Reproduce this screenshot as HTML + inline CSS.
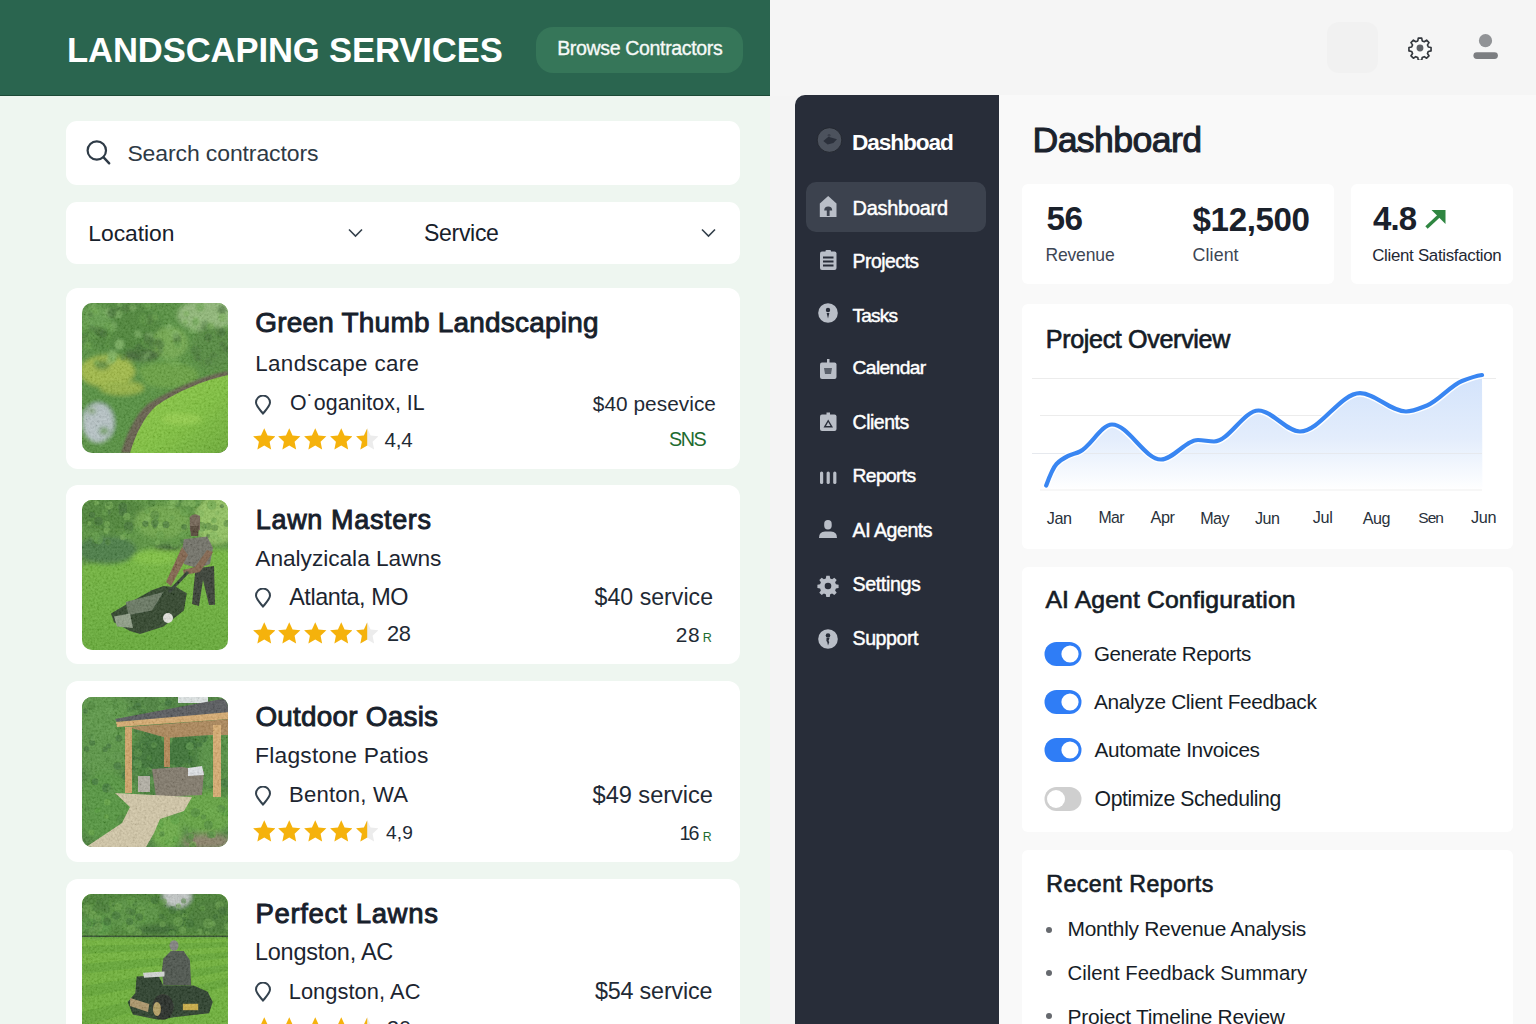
<!DOCTYPE html>
<html><head><meta charset="utf-8">
<style>
*{margin:0;padding:0;box-sizing:border-box}
html,body{width:1536px;height:1024px;overflow:hidden}
body{font-family:"Liberation Sans",sans-serif;background:#f4f4f4;position:relative}
.a{position:absolute;display:block}
.t{position:absolute;white-space:nowrap;line-height:1}
.w{position:absolute;background:#fff}
</style></head><body>

<div class="a" style="left:0;top:0;width:770px;height:1024px;background:#eef6f0"></div>
<div class="a" style="left:0;top:0;width:770px;height:96px;background:#2a654f;border-bottom:1.5px solid #1c4a37"></div>
<div class="t" style="left:67.0px;top:32.7px;font-size:34.62px;letter-spacing:-0.11px;font-weight:bold;color:#ffffff;">LANDSCAPING SERVICES</div>
<div class="a" style="left:536px;top:27px;width:207px;height:46px;border-radius:17px;background:#367659"></div>
<div class="t" style="left:557.2px;top:39.1px;font-size:19.54px;letter-spacing:-0.35px;font-weight:normal;color:#f6f9f7;-webkit-text-stroke:0.35px #f6f9f7;">Browse Contractors</div>
<div class="w" style="left:66px;top:121px;width:674px;height:64px;border-radius:11px"></div>
<svg class="a" style="left:84px;top:138px" width="30" height="30" viewBox="0 0 30 30"><circle cx="12.8" cy="12.5" r="9.2" fill="none" stroke="#2f3b47" stroke-width="2.2"/><line x1="19.6" y1="19.4" x2="25.2" y2="25.3" stroke="#2f3b47" stroke-width="2.4" stroke-linecap="round"/></svg>
<div class="t" style="left:127.4px;top:141.5px;font-size:22.98px;letter-spacing:-0.10px;font-weight:normal;color:#2e3a45;">Search contractors</div>
<div class="w" style="left:66px;top:202px;width:674px;height:62px;border-radius:11px"></div>
<div class="t" style="left:88.3px;top:221.5px;font-size:22.85px;letter-spacing:-0.03px;font-weight:normal;color:#17212b;">Location</div>
<div class="t" style="left:424.0px;top:221.7px;font-size:23.06px;letter-spacing:-0.32px;font-weight:normal;color:#17212b;">Service</div>
<svg class="a" style="left:347px;top:227px" width="17" height="12" viewBox="0 0 17 12"><polyline points="2,2.5 8.5,9 15,2.5" fill="none" stroke="#34404b" stroke-width="1.6"/></svg>
<svg class="a" style="left:700px;top:227px" width="17" height="12" viewBox="0 0 17 12"><polyline points="2,2.5 8.5,9 15,2.5" fill="none" stroke="#34404b" stroke-width="1.6"/></svg>
<div class="w" style="left:66px;top:288px;width:674px;height:180.5px;border-radius:12px"></div>
<div class="a" style="left:82px;top:303px;width:146px;height:150px;border-radius:10px;overflow:hidden"><svg width="146" height="150" viewBox="0 0 146 150"><defs><filter id="tx1" x="0" y="0" width="100%" height="100%"><feTurbulence type="fractalNoise" baseFrequency="0.45" numOctaves="2" seed="1"/><feColorMatrix type="matrix" values="1.4 0 0 0 -0.2  1.4 0 0 0 -0.2  1.4 0 0 0 -0.2  0 0 0 0 0.22"/></filter><filter id="bl1" x="-20%" y="-20%" width="140%" height="140%"><feGaussianBlur stdDeviation="2.2"/></filter><filter id="bs1"><feGaussianBlur stdDeviation="0.8"/></filter><linearGradient id="l1" x1="0" y1="0" x2="1" y2="1"><stop offset="0" stop-color="#8acc3a"/><stop offset="0.6" stop-color="#76be30"/><stop offset="1" stop-color="#62a828"/></linearGradient></defs><rect width="146" height="150" fill="#4a8a32"/><g filter="url(#bl1)"><ellipse cx="40" cy="25" rx="40" ry="25" fill="#3f7e2c"/><ellipse cx="15" cy="15" rx="15" ry="12" fill="#5a9a40"/><ellipse cx="125" cy="12" rx="30" ry="16" fill="#8ab670"/><ellipse cx="130" cy="45" rx="20" ry="22" fill="#4a8430"/><ellipse cx="88" cy="40" rx="18" ry="16" fill="#6aa542"/><ellipse cx="60" cy="52" rx="18" ry="6" fill="#355f28"/><ellipse cx="85" cy="72" rx="32" ry="13" fill="#5e9c36"/><ellipse cx="30" cy="95" rx="35" ry="40" fill="#4a8a30"/><ellipse cx="25" cy="68" rx="28" ry="16" fill="#9cb83a"/><ellipse cx="40" cy="85" rx="22" ry="7" fill="#90b038"/><ellipse cx="20" cy="62" rx="8" ry="5" fill="#5a8a30"/><ellipse cx="16" cy="120" rx="16" ry="20" fill="#b4c2c4"/><ellipse cx="22" cy="128" rx="5" ry="4" fill="#6a9a5a"/><ellipse cx="10" cy="108" rx="4" ry="3" fill="#7aa06a"/></g><g filter="url(#bs1)"><circle cx="66.0" cy="33.6" r="4.8" fill="#2f5f22" opacity="0.55"/><circle cx="66.0" cy="51.3" r="2.6" fill="#80b860" opacity="0.55"/><circle cx="69.5" cy="36.8" r="2.6" fill="#2f5f22" opacity="0.55"/><circle cx="44.3" cy="5.4" r="4.4" fill="#3a7028" opacity="0.55"/><circle cx="86.9" cy="23.8" r="3.4" fill="#80b860" opacity="0.55"/><circle cx="94.9" cy="37.4" r="4.5" fill="#3a7028" opacity="0.55"/><circle cx="8.7" cy="11.4" r="2.7" fill="#3a7028" opacity="0.55"/><circle cx="113.6" cy="19.6" r="3.8" fill="#5a9a3a" opacity="0.55"/><circle cx="75.8" cy="38.4" r="3.5" fill="#3a7028" opacity="0.55"/><circle cx="66.8" cy="16.7" r="5.0" fill="#3a7028" opacity="0.55"/><circle cx="103.3" cy="18.9" r="2.7" fill="#6aaa45" opacity="0.55"/><circle cx="4.3" cy="33.8" r="2.3" fill="#3a7028" opacity="0.55"/><circle cx="123.6" cy="23.2" r="4.9" fill="#3a7028" opacity="0.55"/><circle cx="31.2" cy="55.6" r="2.2" fill="#2f5f22" opacity="0.55"/><circle cx="143.1" cy="23.8" r="2.2" fill="#5a9a3a" opacity="0.55"/><circle cx="113.7" cy="16.2" r="2.3" fill="#6aaa45" opacity="0.55"/><circle cx="2.2" cy="24.6" r="4.8" fill="#5a9a3a" opacity="0.55"/><circle cx="36.0" cy="6.1" r="2.2" fill="#2f5f22" opacity="0.55"/><circle cx="25.9" cy="33.6" r="3.3" fill="#5a9a3a" opacity="0.55"/><circle cx="143.9" cy="46.2" r="3.3" fill="#2f5f22" opacity="0.55"/><circle cx="17.0" cy="25.2" r="2.6" fill="#6aaa45" opacity="0.55"/><circle cx="126.2" cy="58.5" r="3.8" fill="#3a7028" opacity="0.55"/><circle cx="30.8" cy="23.7" r="4.6" fill="#80b860" opacity="0.55"/><circle cx="14.6" cy="59.4" r="2.6" fill="#6aaa45" opacity="0.55"/><circle cx="1.4" cy="36.6" r="4.5" fill="#2f5f22" opacity="0.55"/><circle cx="10.7" cy="5.4" r="3.7" fill="#5a9a3a" opacity="0.55"/><circle cx="2.3" cy="22.1" r="3.9" fill="#5a9a3a" opacity="0.55"/><circle cx="140.0" cy="29.0" r="3.7" fill="#2f5f22" opacity="0.55"/><circle cx="26.7" cy="9.2" r="4.7" fill="#80b860" opacity="0.55"/><circle cx="36.4" cy="11.4" r="4.2" fill="#80b860" opacity="0.55"/><circle cx="28.7" cy="57.0" r="4.6" fill="#80b860" opacity="0.55"/><circle cx="11.5" cy="2.8" r="2.3" fill="#80b860" opacity="0.55"/><circle cx="140.6" cy="14.3" r="4.1" fill="#6aaa45" opacity="0.55"/><circle cx="61.4" cy="54.3" r="3.5" fill="#80b860" opacity="0.55"/><circle cx="25.6" cy="43.2" r="2.2" fill="#5a9a3a" opacity="0.55"/><circle cx="70.0" cy="39.2" r="3.8" fill="#3a7028" opacity="0.55"/><circle cx="40.9" cy="55.0" r="2.6" fill="#3a7028" opacity="0.55"/><circle cx="10.1" cy="24.7" r="2.7" fill="#3a7028" opacity="0.55"/><circle cx="25.7" cy="22.1" r="3.7" fill="#5a9a3a" opacity="0.55"/><circle cx="13.5" cy="8.3" r="3.4" fill="#6aaa45" opacity="0.55"/><circle cx="95.9" cy="41.5" r="3.8" fill="#5a9a3a" opacity="0.55"/><circle cx="86.1" cy="55.4" r="3.4" fill="#6aaa45" opacity="0.55"/><circle cx="102.3" cy="57.8" r="2.1" fill="#3a7028" opacity="0.55"/><circle cx="70.4" cy="43.8" r="3.0" fill="#3a7028" opacity="0.55"/><circle cx="11.0" cy="32.8" r="4.2" fill="#5a9a3a" opacity="0.55"/><circle cx="115.8" cy="54.9" r="3.1" fill="#2f5f22" opacity="0.55"/><circle cx="131.5" cy="52.3" r="3.3" fill="#3a7028" opacity="0.55"/><circle cx="126.1" cy="34.4" r="3.9" fill="#2f5f22" opacity="0.55"/><circle cx="55.4" cy="0.7" r="2.2" fill="#3a7028" opacity="0.55"/><circle cx="93.4" cy="59.6" r="4.6" fill="#6aaa45" opacity="0.55"/><circle cx="56.7" cy="44.1" r="3.7" fill="#2f5f22" opacity="0.55"/><circle cx="67.5" cy="32.5" r="3.6" fill="#80b860" opacity="0.55"/><circle cx="4.3" cy="36.1" r="3.4" fill="#5a9a3a" opacity="0.55"/><circle cx="139.8" cy="6.8" r="4.3" fill="#2f5f22" opacity="0.55"/><circle cx="37.4" cy="0.7" r="2.9" fill="#80b860" opacity="0.55"/><circle cx="29.6" cy="10.2" r="4.7" fill="#2f5f22" opacity="0.55"/><circle cx="72.8" cy="14.5" r="3.2" fill="#6aaa45" opacity="0.55"/><circle cx="29.0" cy="25.9" r="4.4" fill="#5a9a3a" opacity="0.55"/><circle cx="128.5" cy="23.1" r="3.7" fill="#6aaa45" opacity="0.55"/><circle cx="30.6" cy="8.1" r="3.1" fill="#3a7028" opacity="0.55"/><circle cx="103.8" cy="57.0" r="2.8" fill="#5a9a3a" opacity="0.55"/><circle cx="16.5" cy="28.3" r="4.8" fill="#2f5f22" opacity="0.55"/><circle cx="55.9" cy="31.2" r="4.0" fill="#80b860" opacity="0.55"/><circle cx="66.1" cy="4.5" r="2.1" fill="#80b860" opacity="0.55"/><circle cx="6.1" cy="42.5" r="3.7" fill="#6aaa45" opacity="0.55"/><circle cx="94.8" cy="33.8" r="3.9" fill="#2f5f22" opacity="0.55"/><circle cx="66.4" cy="1.5" r="4.5" fill="#5a9a3a" opacity="0.55"/><circle cx="113.8" cy="47.8" r="5.0" fill="#3a7028" opacity="0.55"/><circle cx="65.2" cy="37.8" r="4.0" fill="#6aaa45" opacity="0.55"/><circle cx="139.9" cy="41.1" r="2.6" fill="#2f5f22" opacity="0.55"/><circle cx="37.4" cy="42.9" r="4.3" fill="#80b860" opacity="0.55"/><circle cx="104.3" cy="10.7" r="2.8" fill="#6aaa45" opacity="0.55"/><circle cx="78.8" cy="56.8" r="3.5" fill="#5a9a3a" opacity="0.55"/><circle cx="57.5" cy="47.5" r="4.7" fill="#3a7028" opacity="0.55"/><circle cx="59.9" cy="53.6" r="3.2" fill="#2f5f22" opacity="0.55"/><circle cx="66.2" cy="37.5" r="4.7" fill="#2f5f22" opacity="0.55"/><circle cx="80.3" cy="39.2" r="3.5" fill="#6aaa45" opacity="0.55"/><circle cx="67.7" cy="39.1" r="2.6" fill="#3a7028" opacity="0.55"/><circle cx="31.1" cy="54.0" r="4.9" fill="#6aaa45" opacity="0.55"/><circle cx="78.4" cy="47.4" r="3.0" fill="#3a7028" opacity="0.55"/><circle cx="50.9" cy="5.0" r="3.3" fill="#80b860" opacity="0.55"/><circle cx="61.5" cy="16.5" r="4.8" fill="#5a9a3a" opacity="0.55"/><circle cx="118.1" cy="3.8" r="4.4" fill="#5a9a3a" opacity="0.55"/><circle cx="77.8" cy="41.2" r="4.7" fill="#2f5f22" opacity="0.55"/><circle cx="21.7" cy="31.0" r="4.2" fill="#2f5f22" opacity="0.55"/><circle cx="138.1" cy="29.6" r="4.8" fill="#3a7028" opacity="0.55"/><circle cx="110.6" cy="26.4" r="3.7" fill="#80b860" opacity="0.55"/><circle cx="93.3" cy="31.4" r="4.5" fill="#80b860" opacity="0.55"/><circle cx="37.5" cy="40.3" r="4.9" fill="#80b860" opacity="0.55"/><circle cx="30.4" cy="51.0" r="4.9" fill="#80b860" opacity="0.55"/></g><path d="M146 68 C120 73 88 87 66 101 C52 113 44 133 39 150 L146 150Z" fill="#5c5440" filter="url(#bs1)"/><path d="M146 72 C122 77 94 89 74 103 C61 115 53 133 48 150 L146 150Z" fill="url(#l1)"/><ellipse cx="100" cy="116" rx="20" ry="6" fill="#a2dc4c" opacity="0.5" filter="url(#bl1)"/><rect width="146" height="150" filter="url(#tx1)" opacity="0.8"/></svg></div>
<div class="t" style="left:255.2px;top:309.2px;font-size:27.96px;letter-spacing:0.23px;font-weight:normal;color:#17202b;-webkit-text-stroke:0.90px #17202b;">Green Thumb Landscaping</div>
<div class="t" style="left:255.3px;top:353.1px;font-size:22.37px;letter-spacing:0.35px;font-weight:normal;color:#1c2530;">Landscape care</div>
<svg class="a" style="left:254px;top:395px" width="18" height="20" viewBox="0 0 18 20"><path d="M9 18.6 C6.5 15.5 2 11 2 7.6 A7 7 0 0 1 16 7.6 C16 11 11.5 15.5 9 18.6 Z" fill="none" stroke="#34424e" stroke-width="2" stroke-linejoin="round"/></svg>
<div class="t" style="left:290.0px;top:393.0px;font-size:21.31px;letter-spacing:0.07px;font-weight:normal;color:#1c2530;">O˙oganitox, IL</div>
<div class="t" style="left:592.8px;top:394.3px;font-size:20.81px;letter-spacing:0.05px;font-weight:normal;color:#1f2a35;">$40 pesevice</div>
<svg class="a" style="left:252.5px;top:427.5px" width="22.5" height="22.5"><polygon points="11.25,0.22 14.55,7.38 22.38,8.31 16.59,13.66 18.13,21.39 11.25,17.54 4.37,21.39 5.91,13.66 0.12,8.31 7.95,7.38" fill="#f5b20c"/></svg><svg class="a" style="left:278.3px;top:427.5px" width="22.5" height="22.5"><polygon points="11.25,0.22 14.55,7.38 22.38,8.31 16.59,13.66 18.13,21.39 11.25,17.54 4.37,21.39 5.91,13.66 0.12,8.31 7.95,7.38" fill="#f5b20c"/></svg><svg class="a" style="left:304.1px;top:427.5px" width="22.5" height="22.5"><polygon points="11.25,0.22 14.55,7.38 22.38,8.31 16.59,13.66 18.13,21.39 11.25,17.54 4.37,21.39 5.91,13.66 0.12,8.31 7.95,7.38" fill="#f5b20c"/></svg><svg class="a" style="left:329.9px;top:427.5px" width="22.5" height="22.5"><polygon points="11.25,0.22 14.55,7.38 22.38,8.31 16.59,13.66 18.13,21.39 11.25,17.54 4.37,21.39 5.91,13.66 0.12,8.31 7.95,7.38" fill="#f5b20c"/></svg><svg class="a" style="left:355.7px;top:427.5px" width="22.5" height="22.5"><defs><clipPath id="h0"><rect x="0" y="0" width="11.2" height="22.5"/></clipPath></defs><polygon points="11.25,0.22 14.55,7.38 22.38,8.31 16.59,13.66 18.13,21.39 11.25,17.54 4.37,21.39 5.91,13.66 0.12,8.31 7.95,7.38" fill="#ececec"/><polygon points="11.25,0.22 14.55,7.38 22.38,8.31 16.59,13.66 18.13,21.39 11.25,17.54 4.37,21.39 5.91,13.66 0.12,8.31 7.95,7.38" fill="#f5b20c" clip-path="url(#h0)"/></svg>
<div class="t" style="left:384.5px;top:429.5px;font-size:20.62px;letter-spacing:-0.28px;font-weight:normal;color:#1f2a35;">4,4</div>
<div class="t" style="left:669.0px;top:429.5px;font-size:19.75px;letter-spacing:-1.45px;font-weight:normal;color:#1e6b2f;">SNS</div>
<div class="w" style="left:66px;top:485px;width:674px;height:179px;border-radius:12px"></div>
<div class="a" style="left:82px;top:500px;width:146px;height:150px;border-radius:10px;overflow:hidden"><svg width="146" height="150" viewBox="0 0 146 150"><defs><filter id="tx2" x="0" y="0" width="100%" height="100%"><feTurbulence type="fractalNoise" baseFrequency="0.45" numOctaves="2" seed="2"/><feColorMatrix type="matrix" values="1.4 0 0 0 -0.2  1.4 0 0 0 -0.2  1.4 0 0 0 -0.2  0 0 0 0 0.22"/></filter><filter id="bl2" x="-20%" y="-20%" width="140%" height="140%"><feGaussianBlur stdDeviation="2.2"/></filter><filter id="bs2"><feGaussianBlur stdDeviation="0.6"/></filter><linearGradient id="g2" x1="0" y1="0" x2="0" y2="1"><stop offset="0" stop-color="#72ba34"/><stop offset="1" stop-color="#5ca82a"/></linearGradient></defs><rect width="146" height="150" fill="url(#g2)"/><g filter="url(#bl2)"><path d="M-5 -5 H151 V50 C120 48 100 47 85 47 C60 47 40 60 -5 66Z" fill="#4f8e32"/><ellipse cx="30" cy="14" rx="35" ry="18" fill="#427e2c"/><ellipse cx="135" cy="20" rx="22" ry="24" fill="#8cc056"/><ellipse cx="80" cy="22" rx="28" ry="16" fill="#66a23e"/><ellipse cx="25" cy="50" rx="30" ry="14" fill="#3d7538"/><ellipse cx="86" cy="47.5" rx="14" ry="2.5" fill="#2a4e26"/><ellipse cx="72" cy="58" rx="22" ry="7" fill="#78c036"/></g><g filter="url(#bs2)"><circle cx="139.9" cy="6.2" r="2.1" fill="#2f6226" opacity="0.55"/><circle cx="26.9" cy="5.3" r="4.0" fill="#78b450" opacity="0.55"/><circle cx="115.7" cy="3.5" r="2.8" fill="#3f7a2c" opacity="0.55"/><circle cx="46.6" cy="26.5" r="4.8" fill="#2f6226" opacity="0.55"/><circle cx="103.4" cy="2.1" r="4.6" fill="#78b450" opacity="0.55"/><circle cx="45.4" cy="8.4" r="4.5" fill="#3f7a2c" opacity="0.55"/><circle cx="102.0" cy="26.9" r="2.8" fill="#2f6226" opacity="0.55"/><circle cx="45.6" cy="34.4" r="4.9" fill="#5a9a3a" opacity="0.55"/><circle cx="40.8" cy="11.9" r="4.1" fill="#2f6226" opacity="0.55"/><circle cx="7.2" cy="23.4" r="2.1" fill="#78b450" opacity="0.55"/><circle cx="73.9" cy="22.8" r="3.2" fill="#5a9a3a" opacity="0.55"/><circle cx="44.9" cy="16.4" r="3.7" fill="#78b450" opacity="0.55"/><circle cx="84.0" cy="24.7" r="3.6" fill="#2f6226" opacity="0.55"/><circle cx="12.9" cy="43.8" r="3.1" fill="#2f6226" opacity="0.55"/><circle cx="114.1" cy="2.6" r="4.5" fill="#5a9a3a" opacity="0.55"/><circle cx="74.8" cy="17.6" r="2.3" fill="#5a9a3a" opacity="0.55"/><circle cx="25.0" cy="24.1" r="3.0" fill="#78b450" opacity="0.55"/><circle cx="132.8" cy="27.7" r="3.3" fill="#3f7a2c" opacity="0.55"/><circle cx="78.2" cy="35.0" r="3.9" fill="#5a9a3a" opacity="0.55"/><circle cx="95.7" cy="4.4" r="2.6" fill="#3f7a2c" opacity="0.55"/><circle cx="120.9" cy="40.5" r="3.4" fill="#3f7a2c" opacity="0.55"/><circle cx="72.8" cy="23.1" r="3.8" fill="#2f6226" opacity="0.55"/><circle cx="69.5" cy="2.9" r="4.1" fill="#3f7a2c" opacity="0.55"/><circle cx="119.7" cy="26.8" r="4.8" fill="#3f7a2c" opacity="0.55"/><circle cx="27.3" cy="15.4" r="2.2" fill="#3f7a2c" opacity="0.55"/><circle cx="25.0" cy="30.5" r="3.3" fill="#78b450" opacity="0.55"/><circle cx="25.9" cy="3.4" r="2.6" fill="#3f7a2c" opacity="0.55"/><circle cx="145.0" cy="23.5" r="3.5" fill="#3f7a2c" opacity="0.55"/><circle cx="26.4" cy="12.2" r="2.3" fill="#2f6226" opacity="0.55"/><circle cx="90.3" cy="17.7" r="2.4" fill="#5a9a3a" opacity="0.55"/><circle cx="5.6" cy="16.6" r="4.5" fill="#3f7a2c" opacity="0.55"/><circle cx="30.0" cy="33.2" r="3.9" fill="#3f7a2c" opacity="0.55"/><circle cx="109.5" cy="31.6" r="3.4" fill="#5a9a3a" opacity="0.55"/><circle cx="129.8" cy="5.0" r="4.8" fill="#5a9a3a" opacity="0.55"/><circle cx="26.0" cy="42.3" r="3.0" fill="#3f7a2c" opacity="0.55"/><circle cx="72.8" cy="26.6" r="2.1" fill="#2f6226" opacity="0.55"/><circle cx="102.3" cy="12.2" r="4.3" fill="#5a9a3a" opacity="0.55"/><circle cx="92.3" cy="43.4" r="4.5" fill="#5a9a3a" opacity="0.55"/><circle cx="64.7" cy="18.9" r="3.1" fill="#78b450" opacity="0.55"/><circle cx="126.1" cy="36.0" r="2.0" fill="#2f6226" opacity="0.55"/><circle cx="88.8" cy="4.7" r="4.5" fill="#78b450" opacity="0.55"/><circle cx="40.7" cy="37.2" r="2.8" fill="#78b450" opacity="0.55"/><circle cx="40.6" cy="7.0" r="4.5" fill="#2f6226" opacity="0.55"/><circle cx="101.7" cy="36.0" r="4.9" fill="#5a9a3a" opacity="0.55"/><circle cx="72.9" cy="15.1" r="4.6" fill="#3f7a2c" opacity="0.55"/><circle cx="56.5" cy="28.9" r="2.6" fill="#5a9a3a" opacity="0.55"/><circle cx="12.5" cy="40.5" r="3.0" fill="#3f7a2c" opacity="0.55"/><circle cx="75.6" cy="42.7" r="2.5" fill="#78b450" opacity="0.55"/><circle cx="126.2" cy="26.3" r="3.6" fill="#3f7a2c" opacity="0.55"/><circle cx="16.6" cy="22.3" r="2.2" fill="#3f7a2c" opacity="0.55"/><circle cx="14.4" cy="2.9" r="2.5" fill="#78b450" opacity="0.55"/><circle cx="137.0" cy="40.0" r="3.2" fill="#78b450" opacity="0.55"/><circle cx="47.0" cy="29.7" r="4.4" fill="#3f7a2c" opacity="0.55"/><circle cx="131.6" cy="35.2" r="4.0" fill="#78b450" opacity="0.55"/><circle cx="99.1" cy="0.1" r="2.7" fill="#3f7a2c" opacity="0.55"/><circle cx="135.2" cy="13.1" r="2.1" fill="#78b450" opacity="0.55"/><circle cx="16.5" cy="39.9" r="4.5" fill="#5a9a3a" opacity="0.55"/><circle cx="23.3" cy="12.5" r="3.2" fill="#5a9a3a" opacity="0.55"/><circle cx="118.7" cy="13.5" r="3.6" fill="#78b450" opacity="0.55"/><circle cx="131.9" cy="20.4" r="2.8" fill="#5a9a3a" opacity="0.55"/><circle cx="13.6" cy="36.2" r="4.3" fill="#5a9a3a" opacity="0.55"/><circle cx="64.9" cy="11.3" r="2.7" fill="#5a9a3a" opacity="0.55"/><circle cx="16.5" cy="21.2" r="4.4" fill="#2f6226" opacity="0.55"/><circle cx="10.1" cy="14.9" r="3.1" fill="#2f6226" opacity="0.55"/><circle cx="63.4" cy="23.7" r="3.2" fill="#2f6226" opacity="0.55"/><circle cx="118.0" cy="29.5" r="3.1" fill="#78b450" opacity="0.55"/><circle cx="100.4" cy="41.2" r="2.3" fill="#2f6226" opacity="0.55"/><circle cx="110.0" cy="3.5" r="3.7" fill="#78b450" opacity="0.55"/><circle cx="91.9" cy="0.9" r="4.8" fill="#78b450" opacity="0.55"/><circle cx="78.5" cy="25.8" r="2.6" fill="#78b450" opacity="0.55"/></g><g filter="url(#bs2)"><path d="M113.5 68.4 L132 66 L133 104.8 L127 105 L121 80 L117 106 L110 104Z" fill="#2a3025"/><path d="M107.7 17 Q112 12 118 16 L118 30 L108 31Z" fill="#6a5a48"/><path d="M108 26 L117 26 L116 36 L109 36Z" fill="#4a3a2c"/><path d="M101.9 39.3 L125.2 36.4 L131 48 L128 64 L116.4 68.4 L101.9 64 L100.4 48Z" fill="#6b6a5e"/><path d="M100 47 L84 82 L89 86 L106 55Z" fill="#7a5a40"/><path d="M125 50 L131 52 L118 72 L102 75 L101 70 L113 67Z" fill="#7a5a40"/><path d="M29 113.5 L43.7 104.8 L69.9 90.2 L81.5 85.9 L94.6 87.3 L104.8 93.2 L101.9 110.6 L81.5 126.6 L58.2 133.9 L48 131 L32 122.3Z" fill="#22381f"/><path d="M43.7 101.9 L81.5 92 L69.9 110.6 L46.6 115Z" fill="#5f7058"/><path d="M32 116.4 L48 113.5 L51 128 L35 126.6Z" fill="#8a9a80"/><line x1="87" y1="92" x2="106" y2="72" stroke="#263626" stroke-width="3.2"/><circle cx="86" cy="118" r="5" fill="#e4e4dc"/></g><rect width="146" height="150" filter="url(#tx2)" opacity="0.8"/></svg></div>
<div class="t" style="left:255.8px;top:506.7px;font-size:27.00px;letter-spacing:0.65px;font-weight:normal;color:#17202b;-webkit-text-stroke:0.90px #17202b;">Lawn Masters</div>
<div class="t" style="left:255.3px;top:547.1px;font-size:22.70px;letter-spacing:-0.03px;font-weight:normal;color:#1c2530;">Analyzicala Lawns</div>
<svg class="a" style="left:254px;top:588px" width="18" height="20" viewBox="0 0 18 20"><path d="M9 18.6 C6.5 15.5 2 11 2 7.6 A7 7 0 0 1 16 7.6 C16 11 11.5 15.5 9 18.6 Z" fill="none" stroke="#34424e" stroke-width="2" stroke-linejoin="round"/></svg>
<div class="t" style="left:289.2px;top:586.2px;font-size:23.40px;letter-spacing:-0.42px;font-weight:normal;color:#1c2530;">Atlanta, MO</div>
<div class="t" style="left:594.6px;top:585.6px;font-size:23.10px;letter-spacing:0.03px;font-weight:normal;color:#1f2a35;">$40 service</div>
<svg class="a" style="left:252.5px;top:621.9px" width="22.5" height="22.5"><polygon points="11.25,0.22 14.55,7.38 22.38,8.31 16.59,13.66 18.13,21.39 11.25,17.54 4.37,21.39 5.91,13.66 0.12,8.31 7.95,7.38" fill="#f5b20c"/></svg><svg class="a" style="left:278.3px;top:621.9px" width="22.5" height="22.5"><polygon points="11.25,0.22 14.55,7.38 22.38,8.31 16.59,13.66 18.13,21.39 11.25,17.54 4.37,21.39 5.91,13.66 0.12,8.31 7.95,7.38" fill="#f5b20c"/></svg><svg class="a" style="left:304.1px;top:621.9px" width="22.5" height="22.5"><polygon points="11.25,0.22 14.55,7.38 22.38,8.31 16.59,13.66 18.13,21.39 11.25,17.54 4.37,21.39 5.91,13.66 0.12,8.31 7.95,7.38" fill="#f5b20c"/></svg><svg class="a" style="left:329.9px;top:621.9px" width="22.5" height="22.5"><polygon points="11.25,0.22 14.55,7.38 22.38,8.31 16.59,13.66 18.13,21.39 11.25,17.54 4.37,21.39 5.91,13.66 0.12,8.31 7.95,7.38" fill="#f5b20c"/></svg><svg class="a" style="left:355.7px;top:621.9px" width="22.5" height="22.5"><defs><clipPath id="h1"><rect x="0" y="0" width="11.2" height="22.5"/></clipPath></defs><polygon points="11.25,0.22 14.55,7.38 22.38,8.31 16.59,13.66 18.13,21.39 11.25,17.54 4.37,21.39 5.91,13.66 0.12,8.31 7.95,7.38" fill="#ececec"/><polygon points="11.25,0.22 14.55,7.38 22.38,8.31 16.59,13.66 18.13,21.39 11.25,17.54 4.37,21.39 5.91,13.66 0.12,8.31 7.95,7.38" fill="#f5b20c" clip-path="url(#h1)"/></svg>
<div class="t" style="left:387.0px;top:623.2px;font-size:21.90px;letter-spacing:-0.31px;font-weight:normal;color:#1f2a35;">28</div>
<div class="t" style="left:675.8px;top:625.0px;font-size:20.89px;letter-spacing:0.51px;font-weight:normal;color:#1f2b35;">28</div>
<div class="t" style="left:702.7px;top:632.1px;font-size:12.58px;letter-spacing:0.00px;font-weight:normal;color:#1e6b2f;">R</div>
<div class="w" style="left:66px;top:681px;width:674px;height:181px;border-radius:12px"></div>
<div class="a" style="left:82px;top:696.5px;width:146px;height:150px;border-radius:10px;overflow:hidden"><svg width="146" height="150" viewBox="0 0 146 150"><defs><filter id="tx3" x="0" y="0" width="100%" height="100%"><feTurbulence type="fractalNoise" baseFrequency="0.45" numOctaves="2" seed="3"/><feColorMatrix type="matrix" values="1.4 0 0 0 -0.2  1.4 0 0 0 -0.2  1.4 0 0 0 -0.2  0 0 0 0 0.22"/></filter><filter id="bl3" x="-20%" y="-20%" width="140%" height="140%"><feGaussianBlur stdDeviation="3"/></filter><filter id="bs3"><feGaussianBlur stdDeviation="0.6"/></filter></defs><rect width="146" height="150" fill="#3f7a30"/><g filter="url(#bl3)"><ellipse cx="20" cy="35" rx="35" ry="45" fill="#4f9038"/><ellipse cx="90" cy="60" rx="45" ry="25" fill="#2f6a28"/><ellipse cx="135" cy="60" rx="20" ry="35" fill="#4a8a35"/><ellipse cx="25" cy="110" rx="35" ry="35" fill="#4a9030"/><ellipse cx="125" cy="115" rx="30" ry="22" fill="#5aa035"/><ellipse cx="85" cy="135" rx="16" ry="18" fill="#62a83a"/><ellipse cx="125" cy="145" rx="25" ry="8" fill="#857a60"/></g><g filter="url(#bs3)"><circle cx="83.3" cy="60.1" r="4.5" fill="#2c6224" opacity="0.55"/><circle cx="69.9" cy="83.6" r="3.6" fill="#5a9a42" opacity="0.55"/><circle cx="143.0" cy="86.0" r="4.8" fill="#2c6224" opacity="0.55"/><circle cx="141.1" cy="50.2" r="3.3" fill="#3a7a2c" opacity="0.55"/><circle cx="44.0" cy="29.4" r="3.5" fill="#3a7a2c" opacity="0.55"/><circle cx="108.5" cy="81.7" r="4.0" fill="#2c6224" opacity="0.55"/><circle cx="135.5" cy="52.8" r="4.0" fill="#3a7a2c" opacity="0.55"/><circle cx="126.2" cy="30.3" r="4.7" fill="#5a9a42" opacity="0.55"/><circle cx="144.6" cy="6.3" r="3.1" fill="#2c6224" opacity="0.55"/><circle cx="112.4" cy="48.7" r="3.0" fill="#2c6224" opacity="0.55"/><circle cx="76.6" cy="28.9" r="3.2" fill="#5a9a42" opacity="0.55"/><circle cx="100.4" cy="83.5" r="3.1" fill="#3a7a2c" opacity="0.55"/><circle cx="9.2" cy="8.9" r="4.4" fill="#3a7a2c" opacity="0.55"/><circle cx="8.4" cy="26.2" r="2.6" fill="#5a9a42" opacity="0.55"/><circle cx="98.8" cy="36.9" r="3.8" fill="#2c6224" opacity="0.55"/><circle cx="86.1" cy="43.2" r="4.6" fill="#4f8e38" opacity="0.55"/><circle cx="10.3" cy="45.7" r="3.1" fill="#2c6224" opacity="0.55"/><circle cx="16.2" cy="82.9" r="2.0" fill="#4f8e38" opacity="0.55"/><circle cx="105.6" cy="82.9" r="4.5" fill="#5a9a42" opacity="0.55"/><circle cx="132.8" cy="69.3" r="3.5" fill="#3a7a2c" opacity="0.55"/><circle cx="129.3" cy="88.4" r="2.8" fill="#2c6224" opacity="0.55"/><circle cx="61.6" cy="48.2" r="2.8" fill="#4f8e38" opacity="0.55"/><circle cx="56.6" cy="72.1" r="3.0" fill="#2c6224" opacity="0.55"/><circle cx="24.5" cy="91.0" r="4.7" fill="#2c6224" opacity="0.55"/><circle cx="90.8" cy="27.2" r="3.9" fill="#2c6224" opacity="0.55"/><circle cx="121.4" cy="41.2" r="4.4" fill="#2c6224" opacity="0.55"/><circle cx="109.6" cy="55.7" r="3.5" fill="#3a7a2c" opacity="0.55"/><circle cx="33.3" cy="8.8" r="2.8" fill="#3a7a2c" opacity="0.55"/><circle cx="83.7" cy="18.9" r="2.6" fill="#3a7a2c" opacity="0.55"/><circle cx="9.4" cy="64.6" r="2.0" fill="#4f8e38" opacity="0.55"/><circle cx="145.4" cy="64.6" r="2.0" fill="#5a9a42" opacity="0.55"/><circle cx="60.4" cy="87.1" r="4.4" fill="#5a9a42" opacity="0.55"/><circle cx="66.7" cy="74.1" r="3.8" fill="#5a9a42" opacity="0.55"/><circle cx="115.5" cy="21.7" r="2.3" fill="#2c6224" opacity="0.55"/><circle cx="13.0" cy="84.8" r="3.5" fill="#2c6224" opacity="0.55"/><circle cx="141.3" cy="71.7" r="4.5" fill="#3a7a2c" opacity="0.55"/><circle cx="117.6" cy="47.3" r="2.9" fill="#2c6224" opacity="0.55"/><circle cx="47.7" cy="12.2" r="3.0" fill="#2c6224" opacity="0.55"/><circle cx="56.5" cy="71.4" r="2.8" fill="#3a7a2c" opacity="0.55"/><circle cx="77.1" cy="79.6" r="2.8" fill="#5a9a42" opacity="0.55"/><circle cx="60.5" cy="12.4" r="4.4" fill="#4f8e38" opacity="0.55"/><circle cx="67.2" cy="60.7" r="2.7" fill="#3a7a2c" opacity="0.55"/><circle cx="3.4" cy="14.2" r="2.6" fill="#2c6224" opacity="0.55"/><circle cx="34.7" cy="58.4" r="4.4" fill="#4f8e38" opacity="0.55"/><circle cx="65.6" cy="36.4" r="2.8" fill="#2c6224" opacity="0.55"/><circle cx="32.8" cy="4.0" r="2.5" fill="#3a7a2c" opacity="0.55"/><circle cx="50.5" cy="11.1" r="4.9" fill="#4f8e38" opacity="0.55"/><circle cx="48.4" cy="76.9" r="2.1" fill="#5a9a42" opacity="0.55"/><circle cx="98.2" cy="12.3" r="2.5" fill="#4f8e38" opacity="0.55"/><circle cx="90.0" cy="71.4" r="4.5" fill="#4f8e38" opacity="0.55"/><circle cx="27.5" cy="18.9" r="4.6" fill="#4f8e38" opacity="0.55"/><circle cx="125.2" cy="67.3" r="2.8" fill="#4f8e38" opacity="0.55"/><circle cx="132.5" cy="59.6" r="2.7" fill="#4f8e38" opacity="0.55"/><circle cx="117.0" cy="42.2" r="3.2" fill="#3a7a2c" opacity="0.55"/><circle cx="53.9" cy="41.9" r="2.8" fill="#3a7a2c" opacity="0.55"/><circle cx="15.1" cy="17.7" r="3.0" fill="#5a9a42" opacity="0.55"/><circle cx="121.8" cy="12.5" r="2.7" fill="#5a9a42" opacity="0.55"/><circle cx="138.2" cy="39.3" r="2.4" fill="#3a7a2c" opacity="0.55"/><circle cx="116.0" cy="37.8" r="2.3" fill="#4f8e38" opacity="0.55"/><circle cx="55.9" cy="55.8" r="4.4" fill="#4f8e38" opacity="0.55"/><circle cx="72.1" cy="48.1" r="2.9" fill="#4f8e38" opacity="0.55"/><circle cx="41.3" cy="43.5" r="4.7" fill="#5a9a42" opacity="0.55"/><circle cx="60.5" cy="1.3" r="2.5" fill="#4f8e38" opacity="0.55"/><circle cx="44.3" cy="78.6" r="4.8" fill="#2c6224" opacity="0.55"/><circle cx="117.4" cy="18.5" r="3.4" fill="#5a9a42" opacity="0.55"/><circle cx="36.8" cy="41.2" r="3.5" fill="#2c6224" opacity="0.55"/><circle cx="51.2" cy="11.3" r="2.1" fill="#2c6224" opacity="0.55"/><circle cx="35.4" cy="69.0" r="3.9" fill="#2c6224" opacity="0.55"/><circle cx="120.0" cy="24.9" r="2.1" fill="#3a7a2c" opacity="0.55"/><circle cx="26.7" cy="48.9" r="2.6" fill="#2c6224" opacity="0.55"/><circle cx="9.1" cy="39.7" r="2.9" fill="#3a7a2c" opacity="0.55"/><circle cx="63.2" cy="48.5" r="3.1" fill="#2c6224" opacity="0.55"/><circle cx="51.2" cy="91.3" r="3.8" fill="#4f8e38" opacity="0.55"/><circle cx="107.8" cy="63.7" r="2.8" fill="#2c6224" opacity="0.55"/><circle cx="11.5" cy="41.0" r="3.0" fill="#5a9a42" opacity="0.55"/><circle cx="56.6" cy="13.8" r="2.9" fill="#5a9a42" opacity="0.55"/><circle cx="68.2" cy="76.2" r="3.1" fill="#2c6224" opacity="0.55"/><circle cx="41.9" cy="63.3" r="2.0" fill="#5a9a42" opacity="0.55"/><circle cx="86.4" cy="6.0" r="3.6" fill="#2c6224" opacity="0.55"/><circle cx="26.7" cy="14.3" r="3.5" fill="#5a9a42" opacity="0.55"/><circle cx="60.1" cy="15.8" r="3.9" fill="#2c6224" opacity="0.55"/><circle cx="86.5" cy="40.8" r="4.7" fill="#4f8e38" opacity="0.55"/><circle cx="110.9" cy="1.1" r="3.9" fill="#5a9a42" opacity="0.55"/><circle cx="23.1" cy="52.2" r="2.8" fill="#2c6224" opacity="0.55"/><circle cx="69.6" cy="68.7" r="2.5" fill="#2c6224" opacity="0.55"/><circle cx="25.4" cy="63.2" r="2.2" fill="#3a7a2c" opacity="0.55"/><circle cx="108.5" cy="86.8" r="4.3" fill="#4f8e38" opacity="0.55"/><circle cx="78.9" cy="11.8" r="3.4" fill="#5a9a42" opacity="0.55"/><circle cx="104.3" cy="70.8" r="4.8" fill="#4f8e38" opacity="0.55"/><circle cx="55.5" cy="76.2" r="3.1" fill="#4f8e38" opacity="0.55"/><circle cx="128.3" cy="85.2" r="4.7" fill="#5a9a42" opacity="0.55"/><circle cx="72.7" cy="27.4" r="3.9" fill="#2c6224" opacity="0.55"/><circle cx="107.9" cy="49.1" r="3.9" fill="#5a9a42" opacity="0.55"/><circle cx="30.1" cy="13.2" r="2.3" fill="#5a9a42" opacity="0.55"/><circle cx="141.8" cy="12.6" r="2.3" fill="#5a9a42" opacity="0.55"/><circle cx="79.8" cy="72.0" r="3.5" fill="#2c6224" opacity="0.55"/><circle cx="38.1" cy="32.1" r="3.5" fill="#3a7a2c" opacity="0.55"/><circle cx="29.3" cy="33.3" r="4.0" fill="#5a9a42" opacity="0.55"/><circle cx="112.9" cy="10.2" r="2.4" fill="#2c6224" opacity="0.55"/><circle cx="60.0" cy="74.4" r="4.1" fill="#3a7a2c" opacity="0.55"/><circle cx="4.5" cy="52.1" r="3.0" fill="#2c6224" opacity="0.55"/><circle cx="55.2" cy="32.7" r="3.5" fill="#2c6224" opacity="0.55"/><circle cx="55.5" cy="9.6" r="4.1" fill="#2c6224" opacity="0.55"/><circle cx="80.0" cy="2.5" r="3.6" fill="#5a9a42" opacity="0.55"/><circle cx="83.0" cy="40.7" r="4.3" fill="#4f8e38" opacity="0.55"/><circle cx="58.1" cy="74.3" r="3.5" fill="#3a7a2c" opacity="0.55"/><circle cx="28.8" cy="92.8" r="3.8" fill="#4f8e38" opacity="0.55"/><circle cx="55.5" cy="66.7" r="4.5" fill="#5a9a42" opacity="0.55"/><circle cx="127.4" cy="32.3" r="3.1" fill="#2c6224" opacity="0.55"/><circle cx="17.5" cy="29.3" r="3.1" fill="#5a9a42" opacity="0.55"/><circle cx="77.2" cy="127.2" r="4.5" fill="#4a9a30" opacity="0.55"/><circle cx="128.8" cy="115.1" r="4.8" fill="#62aa3a" opacity="0.55"/><circle cx="139.5" cy="113.8" r="3.8" fill="#4a9a30" opacity="0.55"/><circle cx="14.1" cy="114.1" r="2.0" fill="#4a9a30" opacity="0.55"/><circle cx="109.9" cy="99.8" r="2.2" fill="#62aa3a" opacity="0.55"/><circle cx="108.0" cy="133.8" r="2.2" fill="#62aa3a" opacity="0.55"/><circle cx="136.3" cy="127.4" r="3.9" fill="#62aa3a" opacity="0.55"/><circle cx="55.7" cy="106.7" r="3.4" fill="#4a9a30" opacity="0.55"/><circle cx="88.7" cy="126.5" r="3.2" fill="#62aa3a" opacity="0.55"/><circle cx="34.5" cy="132.6" r="2.3" fill="#3a7a28" opacity="0.55"/><circle cx="109.3" cy="139.6" r="2.8" fill="#4a9a30" opacity="0.55"/><circle cx="84.9" cy="145.2" r="2.6" fill="#4a9a30" opacity="0.55"/><circle cx="59.2" cy="137.7" r="3.0" fill="#4a9a30" opacity="0.55"/><circle cx="76.0" cy="140.5" r="3.4" fill="#62aa3a" opacity="0.55"/><circle cx="52.9" cy="119.4" r="2.4" fill="#4a9a30" opacity="0.55"/><circle cx="43.2" cy="98.8" r="2.9" fill="#4a9a30" opacity="0.55"/><circle cx="85.4" cy="111.3" r="4.8" fill="#62aa3a" opacity="0.55"/><circle cx="137.7" cy="112.0" r="3.6" fill="#3a7a28" opacity="0.55"/><circle cx="110.7" cy="148.1" r="3.8" fill="#62aa3a" opacity="0.55"/><circle cx="9.5" cy="135.4" r="3.0" fill="#62aa3a" opacity="0.55"/><circle cx="25.3" cy="105.2" r="3.2" fill="#62aa3a" opacity="0.55"/><circle cx="53.1" cy="110.3" r="4.8" fill="#3a7a28" opacity="0.55"/><circle cx="93.0" cy="123.2" r="4.4" fill="#4a9a30" opacity="0.55"/><circle cx="39.4" cy="122.6" r="4.9" fill="#3a7a28" opacity="0.55"/><circle cx="79.9" cy="137.0" r="2.8" fill="#3a7a28" opacity="0.55"/><circle cx="130.6" cy="137.7" r="3.4" fill="#4a9a30" opacity="0.55"/><circle cx="143.9" cy="115.2" r="4.4" fill="#4a9a30" opacity="0.55"/><circle cx="16.2" cy="112.9" r="2.5" fill="#4a9a30" opacity="0.55"/><circle cx="38.8" cy="136.3" r="4.1" fill="#3a7a28" opacity="0.55"/><circle cx="107.2" cy="142.4" r="3.8" fill="#3a7a28" opacity="0.55"/><circle cx="141.0" cy="96.3" r="4.5" fill="#3a7a28" opacity="0.55"/><circle cx="72.0" cy="116.6" r="2.4" fill="#62aa3a" opacity="0.55"/><circle cx="58.5" cy="123.6" r="4.6" fill="#4a9a30" opacity="0.55"/><circle cx="121.5" cy="119.9" r="2.7" fill="#3a7a28" opacity="0.55"/><circle cx="139.4" cy="112.1" r="4.0" fill="#3a7a28" opacity="0.55"/><circle cx="90.7" cy="101.6" r="2.7" fill="#3a7a28" opacity="0.55"/><circle cx="74.1" cy="111.9" r="2.3" fill="#4a9a30" opacity="0.55"/><circle cx="128.4" cy="137.7" r="3.5" fill="#3a7a28" opacity="0.55"/><circle cx="44.1" cy="124.3" r="3.6" fill="#4a9a30" opacity="0.55"/><circle cx="136.9" cy="113.8" r="4.3" fill="#62aa3a" opacity="0.55"/><circle cx="110.5" cy="149.4" r="3.1" fill="#3a7a28" opacity="0.55"/><circle cx="5.2" cy="111.8" r="2.5" fill="#3a7a28" opacity="0.55"/><circle cx="67.7" cy="95.5" r="4.2" fill="#3a7a28" opacity="0.55"/><circle cx="126.3" cy="128.1" r="4.6" fill="#3a7a28" opacity="0.55"/><circle cx="38.1" cy="149.7" r="4.5" fill="#4a9a30" opacity="0.55"/><circle cx="24.4" cy="119.5" r="2.3" fill="#62aa3a" opacity="0.55"/><circle cx="93.7" cy="142.2" r="2.9" fill="#4a9a30" opacity="0.55"/><circle cx="6.5" cy="149.4" r="3.6" fill="#3a7a28" opacity="0.55"/><circle cx="100.8" cy="114.1" r="2.6" fill="#4a9a30" opacity="0.55"/><circle cx="113.3" cy="115.7" r="4.8" fill="#3a7a28" opacity="0.55"/></g><g filter="url(#bs3)"><rect x="96" y="-2" width="30" height="8" fill="#dfe5e5"/><path d="M33 22 L140 2 L148 4 L148 16 L35 25Z" fill="#4e5052"/><path d="M34 25 L148 15 L148 22 L35 30Z" fill="#d8a868"/><path d="M45 30 L148 22 L148 38 L128 38 L85 41 L60 34Z" fill="#a88050"/><rect x="43" y="30" width="7" height="66" fill="#d0a060"/><rect x="82" y="40" width="6" height="30" fill="#b08048"/><rect x="131" y="28" width="8" height="72" fill="#d8a868"/><path d="M70 72 L100 70 L122 74 L120 98 L74 100Z" fill="#7a7262"/><path d="M106 71 L120 69 L122 78 L106 79Z" fill="#dfe3e6"/><rect x="56" y="79" width="12" height="16" fill="#b0aca0"/><path d="M33 96 L110 100 L102 114 L78 122 L72 136 L64 150 L4 150 L40 126 L48 110Z" fill="#d2c6a4"/></g><rect width="146" height="150" filter="url(#tx3)" opacity="0.8"/></svg></div>
<div class="t" style="left:255.4px;top:702.5px;font-size:27.85px;letter-spacing:0.26px;font-weight:normal;color:#17202b;-webkit-text-stroke:0.90px #17202b;">Outdoor Oasis</div>
<div class="t" style="left:255.0px;top:744.1px;font-size:22.80px;letter-spacing:0.24px;font-weight:normal;color:#1c2530;">Flagstone Patios</div>
<svg class="a" style="left:254px;top:786px" width="18" height="20" viewBox="0 0 18 20"><path d="M9 18.6 C6.5 15.5 2 11 2 7.6 A7 7 0 0 1 16 7.6 C16 11 11.5 15.5 9 18.6 Z" fill="none" stroke="#34424e" stroke-width="2" stroke-linejoin="round"/></svg>
<div class="t" style="left:289.0px;top:784.3px;font-size:22.10px;letter-spacing:0.21px;font-weight:normal;color:#1c2530;">Benton, WA</div>
<div class="t" style="left:592.6px;top:784.0px;font-size:23.65px;letter-spacing:-0.06px;font-weight:normal;color:#1f2a35;">$49 service</div>
<svg class="a" style="left:252.5px;top:819.9px" width="22.5" height="22.5"><polygon points="11.25,0.22 14.55,7.38 22.38,8.31 16.59,13.66 18.13,21.39 11.25,17.54 4.37,21.39 5.91,13.66 0.12,8.31 7.95,7.38" fill="#f5b20c"/></svg><svg class="a" style="left:278.3px;top:819.9px" width="22.5" height="22.5"><polygon points="11.25,0.22 14.55,7.38 22.38,8.31 16.59,13.66 18.13,21.39 11.25,17.54 4.37,21.39 5.91,13.66 0.12,8.31 7.95,7.38" fill="#f5b20c"/></svg><svg class="a" style="left:304.1px;top:819.9px" width="22.5" height="22.5"><polygon points="11.25,0.22 14.55,7.38 22.38,8.31 16.59,13.66 18.13,21.39 11.25,17.54 4.37,21.39 5.91,13.66 0.12,8.31 7.95,7.38" fill="#f5b20c"/></svg><svg class="a" style="left:329.9px;top:819.9px" width="22.5" height="22.5"><polygon points="11.25,0.22 14.55,7.38 22.38,8.31 16.59,13.66 18.13,21.39 11.25,17.54 4.37,21.39 5.91,13.66 0.12,8.31 7.95,7.38" fill="#f5b20c"/></svg><svg class="a" style="left:355.7px;top:819.9px" width="22.5" height="22.5"><defs><clipPath id="h2"><rect x="0" y="0" width="11.2" height="22.5"/></clipPath></defs><polygon points="11.25,0.22 14.55,7.38 22.38,8.31 16.59,13.66 18.13,21.39 11.25,17.54 4.37,21.39 5.91,13.66 0.12,8.31 7.95,7.38" fill="#ececec"/><polygon points="11.25,0.22 14.55,7.38 22.38,8.31 16.59,13.66 18.13,21.39 11.25,17.54 4.37,21.39 5.91,13.66 0.12,8.31 7.95,7.38" fill="#f5b20c" clip-path="url(#h2)"/></svg>
<div class="t" style="left:386.0px;top:823.3px;font-size:19.13px;letter-spacing:0.20px;font-weight:normal;color:#1f2a35;">4,9</div>
<div class="t" style="left:679.5px;top:824.4px;font-size:19.66px;letter-spacing:-1.82px;font-weight:normal;color:#1f2b35;">16</div>
<div class="t" style="left:702.7px;top:830.6px;font-size:12.29px;letter-spacing:0.00px;font-weight:normal;color:#1e6b2f;">R</div>
<div class="w" style="left:66px;top:879px;width:674px;height:200px;border-radius:12px"></div>
<div class="a" style="left:82px;top:894px;width:146px;height:150px;border-radius:10px;overflow:hidden"><svg width="146" height="150" viewBox="0 0 146 150"><defs><filter id="tx4" x="0" y="0" width="100%" height="100%"><feTurbulence type="fractalNoise" baseFrequency="0.45" numOctaves="2" seed="4"/><feColorMatrix type="matrix" values="1.4 0 0 0 -0.2  1.4 0 0 0 -0.2  1.4 0 0 0 -0.2  0 0 0 0 0.22"/></filter><filter id="bl4" x="-20%" y="-20%" width="140%" height="140%"><feGaussianBlur stdDeviation="2.2"/></filter><filter id="bs4"><feGaussianBlur stdDeviation="0.6"/></filter><linearGradient id="g4" x1="0" y1="0" x2="0" y2="1"><stop offset="0" stop-color="#6cb42e"/><stop offset="1" stop-color="#62ac2a"/></linearGradient></defs><rect width="146" height="150" fill="url(#g4)"/><g filter="url(#bl4)"><rect x="-5" y="-5" width="156" height="47.5" fill="#3d7a28"/><ellipse cx="95" cy="2" rx="14" ry="11" fill="#c0c6c4"/><ellipse cx="14" cy="32" rx="16" ry="12" fill="#4a9030"/><ellipse cx="50" cy="20" rx="28" ry="16" fill="#4c8c30"/><ellipse cx="128" cy="24" rx="20" ry="18" fill="#3a7428"/><ellipse cx="75" cy="36" rx="20" ry="6" fill="#2f6424"/></g><g filter="url(#bs4)"><circle cx="59.6" cy="24.4" r="4.6" fill="#4f9032" opacity="0.55"/><circle cx="55.4" cy="15.8" r="2.7" fill="#3a7428" opacity="0.55"/><circle cx="14.6" cy="32.3" r="4.1" fill="#2c6222" opacity="0.55"/><circle cx="101.3" cy="18.9" r="3.2" fill="#2c6222" opacity="0.55"/><circle cx="52.3" cy="17.5" r="2.8" fill="#4f9032" opacity="0.55"/><circle cx="16.4" cy="8.4" r="2.3" fill="#2c6222" opacity="0.55"/><circle cx="15.7" cy="27.3" r="4.9" fill="#3a7428" opacity="0.55"/><circle cx="50.3" cy="9.3" r="3.4" fill="#4f9032" opacity="0.55"/><circle cx="27.5" cy="14.8" r="2.7" fill="#3a7428" opacity="0.55"/><circle cx="6.3" cy="38.7" r="4.0" fill="#3a7428" opacity="0.55"/><circle cx="107.8" cy="29.6" r="4.5" fill="#2c6222" opacity="0.55"/><circle cx="53.9" cy="22.0" r="3.4" fill="#4f9032" opacity="0.55"/><circle cx="34.1" cy="21.5" r="4.4" fill="#2c6222" opacity="0.55"/><circle cx="90.0" cy="39.1" r="4.2" fill="#2c6222" opacity="0.55"/><circle cx="23.0" cy="13.6" r="2.0" fill="#2c6222" opacity="0.55"/><circle cx="145.2" cy="18.1" r="2.6" fill="#3a7428" opacity="0.55"/><circle cx="52.7" cy="9.8" r="2.7" fill="#3a7428" opacity="0.55"/><circle cx="145.8" cy="31.9" r="4.0" fill="#62a040" opacity="0.55"/><circle cx="17.9" cy="12.1" r="3.9" fill="#3a7428" opacity="0.55"/><circle cx="90.5" cy="16.0" r="3.9" fill="#2c6222" opacity="0.55"/><circle cx="10.9" cy="20.8" r="2.5" fill="#4f9032" opacity="0.55"/><circle cx="125.3" cy="39.3" r="2.2" fill="#62a040" opacity="0.55"/><circle cx="140.3" cy="14.9" r="2.2" fill="#2c6222" opacity="0.55"/><circle cx="79.8" cy="22.6" r="2.9" fill="#2c6222" opacity="0.55"/><circle cx="58.6" cy="16.3" r="4.6" fill="#62a040" opacity="0.55"/><circle cx="10.6" cy="14.6" r="4.8" fill="#4f9032" opacity="0.55"/><circle cx="10.9" cy="21.0" r="4.0" fill="#62a040" opacity="0.55"/><circle cx="12.3" cy="36.7" r="4.3" fill="#2c6222" opacity="0.55"/><circle cx="108.9" cy="23.1" r="3.1" fill="#3a7428" opacity="0.55"/><circle cx="102.4" cy="25.0" r="2.2" fill="#2c6222" opacity="0.55"/><circle cx="126.2" cy="29.5" r="5.0" fill="#62a040" opacity="0.55"/><circle cx="36.5" cy="13.9" r="3.8" fill="#3a7428" opacity="0.55"/><circle cx="46.6" cy="17.1" r="3.5" fill="#3a7428" opacity="0.55"/><circle cx="11.5" cy="37.0" r="4.8" fill="#62a040" opacity="0.55"/><circle cx="55.8" cy="38.7" r="4.2" fill="#62a040" opacity="0.55"/><circle cx="32.1" cy="11.3" r="2.4" fill="#3a7428" opacity="0.55"/><circle cx="48.7" cy="6.5" r="4.1" fill="#4f9032" opacity="0.55"/><circle cx="24.3" cy="24.5" r="2.2" fill="#3a7428" opacity="0.55"/><circle cx="57.1" cy="23.0" r="3.9" fill="#2c6222" opacity="0.55"/><circle cx="58.8" cy="15.6" r="4.4" fill="#4f9032" opacity="0.55"/><circle cx="99.1" cy="29.4" r="3.0" fill="#2c6222" opacity="0.55"/><circle cx="142.8" cy="27.1" r="2.9" fill="#3a7428" opacity="0.55"/><circle cx="116.2" cy="10.0" r="2.0" fill="#3a7428" opacity="0.55"/><circle cx="25.3" cy="9.9" r="4.7" fill="#4f9032" opacity="0.55"/><circle cx="130.8" cy="29.7" r="2.8" fill="#62a040" opacity="0.55"/><circle cx="120.6" cy="14.4" r="2.8" fill="#4f9032" opacity="0.55"/><circle cx="43.7" cy="32.3" r="4.3" fill="#4f9032" opacity="0.55"/><circle cx="96.4" cy="11.8" r="2.5" fill="#62a040" opacity="0.55"/><circle cx="133.4" cy="22.6" r="2.8" fill="#2c6222" opacity="0.55"/><circle cx="100.6" cy="35.9" r="3.5" fill="#62a040" opacity="0.55"/><circle cx="70.2" cy="9.8" r="4.1" fill="#4f9032" opacity="0.55"/><circle cx="36.8" cy="13.7" r="4.7" fill="#4f9032" opacity="0.55"/><circle cx="50.4" cy="18.4" r="3.3" fill="#2c6222" opacity="0.55"/><circle cx="4.8" cy="15.3" r="4.8" fill="#62a040" opacity="0.55"/><circle cx="14.2" cy="13.8" r="3.6" fill="#3a7428" opacity="0.55"/><circle cx="25.2" cy="27.7" r="4.0" fill="#2c6222" opacity="0.55"/><circle cx="96.1" cy="27.6" r="4.8" fill="#62a040" opacity="0.55"/><circle cx="72.6" cy="6.2" r="3.8" fill="#2c6222" opacity="0.55"/><circle cx="24.5" cy="13.6" r="3.7" fill="#3a7428" opacity="0.55"/><circle cx="137.6" cy="11.7" r="4.4" fill="#62a040" opacity="0.55"/><circle cx="7.1" cy="29.5" r="2.9" fill="#3a7428" opacity="0.55"/><circle cx="23.7" cy="14.8" r="4.7" fill="#3a7428" opacity="0.55"/><circle cx="52.2" cy="38.7" r="2.2" fill="#3a7428" opacity="0.55"/><circle cx="80.6" cy="30.2" r="3.0" fill="#62a040" opacity="0.55"/><circle cx="16.3" cy="24.3" r="3.3" fill="#62a040" opacity="0.55"/><circle cx="4.4" cy="6.3" r="2.0" fill="#3a7428" opacity="0.55"/><circle cx="16.5" cy="33.1" r="4.3" fill="#62a040" opacity="0.55"/><circle cx="81.5" cy="7.8" r="3.4" fill="#4f9032" opacity="0.55"/><circle cx="143.6" cy="24.1" r="2.3" fill="#4f9032" opacity="0.55"/><circle cx="30.3" cy="14.7" r="2.8" fill="#4f9032" opacity="0.55"/><circle cx="117.8" cy="37.6" r="3.0" fill="#62a040" opacity="0.55"/><circle cx="101.6" cy="6.9" r="2.6" fill="#3a7428" opacity="0.55"/><circle cx="102.3" cy="21.3" r="2.4" fill="#62a040" opacity="0.55"/><circle cx="36.1" cy="12.5" r="3.7" fill="#62a040" opacity="0.55"/><circle cx="48.9" cy="34.8" r="4.6" fill="#62a040" opacity="0.55"/><circle cx="47.6" cy="27.6" r="3.6" fill="#2c6222" opacity="0.55"/><circle cx="23.2" cy="7.4" r="4.3" fill="#3a7428" opacity="0.55"/><circle cx="140.5" cy="16.4" r="4.2" fill="#2c6222" opacity="0.55"/><circle cx="82.8" cy="24.1" r="2.6" fill="#3a7428" opacity="0.55"/><circle cx="89.8" cy="39.6" r="3.5" fill="#4f9032" opacity="0.55"/></g><rect x="0" y="41.5" width="146" height="1.5" fill="#20401a"/><g filter="url(#bs4)" opacity="0.7"><path d="M0 52 L146 48 L146 53 L0 60Z" fill="#56a026"/><path d="M0 70 L146 58 L146 64 L0 80Z" fill="#56a026"/><path d="M0 92 L146 70 L146 77 L0 104Z" fill="#56a026"/><path d="M0 118 L146 84 L146 92 L0 132Z" fill="#56a026"/></g><g filter="url(#bs4)"><ellipse cx="92" cy="51.5" rx="4.5" ry="5.2" fill="#7a7a78"/><path d="M81.3 64.7 L88.9 57.1 L101.6 57.1 L107.9 66 L109.2 91.4 L81.3 91.4 L80 76.2Z" fill="#404840"/><path d="M54.6 82.5 L76.2 81.3 L81.3 91.4 L111.7 91.4 L125.7 97.8 L130.8 107.9 L127 119.3 L93.9 123.1 L76.2 125.7 L50.8 120.6 L45.7 107.9 L53.3 99Z" fill="#1f321d"/><path d="M61 78.7 L82.5 77.5 L82.5 82.5 L62 83.8Z" fill="#d4d6d4"/><ellipse cx="81" cy="113" rx="10.5" ry="12.7" fill="#191e17"/><ellipse cx="75" cy="115" rx="4" ry="7" fill="#b09a58"/><path d="M48.2 104 L67.3 110 L66 118 L48 112Z" fill="#a89060"/><rect x="100.9" y="109.8" width="15.3" height="6.4" fill="#c8a838"/></g><rect width="146" height="150" filter="url(#tx4)" opacity="0.8"/></svg></div>
<div class="t" style="left:255.4px;top:899.9px;font-size:27.52px;letter-spacing:0.68px;font-weight:normal;color:#17202b;-webkit-text-stroke:0.90px #17202b;">Perfect Lawns</div>
<div class="t" style="left:255.0px;top:941.1px;font-size:23.47px;letter-spacing:-0.24px;font-weight:normal;color:#1c2530;">Longston, AC</div>
<svg class="a" style="left:254px;top:982px" width="18" height="20" viewBox="0 0 18 20"><path d="M9 18.6 C6.5 15.5 2 11 2 7.6 A7 7 0 0 1 16 7.6 C16 11 11.5 15.5 9 18.6 Z" fill="none" stroke="#34424e" stroke-width="2" stroke-linejoin="round"/></svg>
<div class="t" style="left:288.7px;top:981.1px;font-size:21.84px;letter-spacing:0.06px;font-weight:normal;color:#1c2530;">Longston, AC</div>
<div class="t" style="left:594.9px;top:979.8px;font-size:23.32px;letter-spacing:-0.16px;font-weight:normal;color:#1f2a35;">$54 service</div>
<svg class="a" style="left:252.5px;top:1017.0px" width="22.5" height="22.5"><polygon points="11.25,0.22 14.55,7.38 22.38,8.31 16.59,13.66 18.13,21.39 11.25,17.54 4.37,21.39 5.91,13.66 0.12,8.31 7.95,7.38" fill="#f5b20c"/></svg><svg class="a" style="left:278.3px;top:1017.0px" width="22.5" height="22.5"><polygon points="11.25,0.22 14.55,7.38 22.38,8.31 16.59,13.66 18.13,21.39 11.25,17.54 4.37,21.39 5.91,13.66 0.12,8.31 7.95,7.38" fill="#f5b20c"/></svg><svg class="a" style="left:304.1px;top:1017.0px" width="22.5" height="22.5"><polygon points="11.25,0.22 14.55,7.38 22.38,8.31 16.59,13.66 18.13,21.39 11.25,17.54 4.37,21.39 5.91,13.66 0.12,8.31 7.95,7.38" fill="#f5b20c"/></svg><svg class="a" style="left:329.9px;top:1017.0px" width="22.5" height="22.5"><polygon points="11.25,0.22 14.55,7.38 22.38,8.31 16.59,13.66 18.13,21.39 11.25,17.54 4.37,21.39 5.91,13.66 0.12,8.31 7.95,7.38" fill="#f5b20c"/></svg><svg class="a" style="left:355.7px;top:1017.0px" width="22.5" height="22.5"><defs><clipPath id="h3"><rect x="0" y="0" width="11.2" height="22.5"/></clipPath></defs><polygon points="11.25,0.22 14.55,7.38 22.38,8.31 16.59,13.66 18.13,21.39 11.25,17.54 4.37,21.39 5.91,13.66 0.12,8.31 7.95,7.38" fill="#ececec"/><polygon points="11.25,0.22 14.55,7.38 22.38,8.31 16.59,13.66 18.13,21.39 11.25,17.54 4.37,21.39 5.91,13.66 0.12,8.31 7.95,7.38" fill="#f5b20c" clip-path="url(#h3)"/></svg>
<div class="t" style="left:387.0px;top:1018.1px;font-size:21.68px;letter-spacing:-0.07px;font-weight:normal;color:#1f2a35;">30</div>
<div class="a" style="left:770px;top:0;width:766px;height:96px;background:#f5f5f5"></div>
<div class="a" style="left:1327px;top:22px;width:51px;height:51px;border-radius:12px;background:#f1f1f1"></div>
<svg class="a" style="left:1407.5px;top:35.8px" width="24" height="24" viewBox="0 0 28 28"><path d="M12 2.5h4l.6 3.2 2.4 1 2.7-1.8 2.8 2.8-1.8 2.7 1 2.4 3.2.6v4l-3.2.6-1 2.4 1.8 2.7-2.8 2.8-2.7-1.8-2.4 1-.6 3.2h-4l-.6-3.2-2.4-1-2.7 1.8-2.8-2.8 1.8-2.7-1-2.4-3.2-.6v-4l3.2-.6 1-2.4-1.8-2.7 2.8-2.8 2.7 1.8 2.4-1z" fill="#fafafa" stroke="#33373d" stroke-width="1.9" stroke-linejoin="round"/><circle cx="14" cy="14" r="4" fill="#5d6066"/></svg>
<svg class="a" style="left:1470px;top:30px" width="32" height="32" viewBox="0 0 32 32"><circle cx="15.5" cy="10.7" r="6.6" fill="#919396"/><rect x="3.4" y="22.2" width="24.5" height="6.8" rx="3.4" fill="#7c7e81"/></svg>
<div class="a" style="left:998px;top:95px;width:538px;height:929px;background:#f9f9f9"></div>
<div class="a" style="left:795px;top:95px;width:204px;height:929px;background:#282d39;border-top-left-radius:10px"></div>
<svg class="a" style="left:816px;top:126px" width="27" height="28" viewBox="0 0 27 28"><circle cx="13.5" cy="14" r="12.3" fill="#4c525d" stroke="#1f232b" stroke-width="0.8"/><path d="M7.3 15.1 L12.4 10.8 L21 13.3 L17.4 17 L11.6 18.6 Z" fill="#2b303b"/><circle cx="13.1" cy="9.3" r="1.4" fill="#3a3f4a"/></svg>
<div class="t" style="left:852.0px;top:130.5px;font-size:22.65px;letter-spacing:-1.07px;font-weight:bold;color:#ffffff;">Dashboad</div>
<div class="a" style="left:806px;top:182px;width:180px;height:50px;border-radius:10px;background:#3c424e"></div>
<div class="t" style="left:852.6px;top:198.5px;font-size:19.94px;letter-spacing:-0.26px;font-weight:normal;color:#ffffff;-webkit-text-stroke:0.45px #ffffff;">Dashboard</div>
<div class="t" style="left:852.6px;top:251.9px;font-size:19.38px;letter-spacing:-0.50px;font-weight:normal;color:#ffffff;-webkit-text-stroke:0.45px #ffffff;">Projects</div>
<div class="t" style="left:852.6px;top:306.1px;font-size:19.08px;letter-spacing:-0.82px;font-weight:normal;color:#ffffff;-webkit-text-stroke:0.45px #ffffff;">Tasks</div>
<div class="t" style="left:852.6px;top:358.2px;font-size:19.26px;letter-spacing:-0.64px;font-weight:normal;color:#ffffff;-webkit-text-stroke:0.45px #ffffff;">Calendar</div>
<div class="t" style="left:852.6px;top:413.1px;font-size:19.44px;letter-spacing:-0.47px;font-weight:normal;color:#ffffff;-webkit-text-stroke:0.45px #ffffff;">Clients</div>
<div class="t" style="left:852.6px;top:466.0px;font-size:19.26px;letter-spacing:-0.64px;font-weight:normal;color:#ffffff;-webkit-text-stroke:0.45px #ffffff;">Reports</div>
<div class="t" style="left:852.6px;top:520.7px;font-size:19.52px;letter-spacing:-0.45px;font-weight:normal;color:#ffffff;-webkit-text-stroke:0.45px #ffffff;">AI Agents</div>
<div class="t" style="left:852.6px;top:574.6px;font-size:19.61px;letter-spacing:-0.39px;font-weight:normal;color:#ffffff;-webkit-text-stroke:0.45px #ffffff;">Settings</div>
<div class="t" style="left:852.6px;top:628.5px;font-size:19.58px;letter-spacing:-0.46px;font-weight:normal;color:#ffffff;-webkit-text-stroke:0.45px #ffffff;">Support</div>
<svg class="a" style="left:816px;top:194.5px" width="24" height="24" viewBox="0 0 24 24"><path d="M12.2 1 L20.5 8.5 V22 H3.8 V8.5 Z" fill="#b9bec7"/><path d="M8.2 15.5 A4 4 0 0 1 16.2 15.5 H13.6 V21 H10.8 V15.5 Z" fill="#3c424e"/></svg><svg class="a" style="left:816px;top:248px" width="24" height="24" viewBox="0 0 24 24"><rect x="4" y="3.5" width="16.5" height="18.5" rx="2" fill="#b9bec7"/><rect x="9.5" y="2" width="5.5" height="3" rx="1" fill="#b9bec7"/><rect x="7" y="8.5" width="10.5" height="2" fill="#282d39"/><rect x="7" y="12.5" width="10.5" height="2" fill="#282d39"/><rect x="7" y="16.5" width="10.5" height="2" fill="#282d39"/></svg><svg class="a" style="left:816px;top:301px" width="24" height="24" viewBox="0 0 24 24"><circle cx="12" cy="12" r="9.8" fill="#b9bec7"/><circle cx="12" cy="9" r="2.2" fill="#282d39"/><path d="M10.6 12 H13.4 L12 17.5Z" fill="#282d39"/></svg><svg class="a" style="left:816px;top:357px" width="24" height="24" viewBox="0 0 24 24"><rect x="4" y="5.5" width="16.5" height="16.5" rx="2" fill="#b9bec7"/><rect x="11" y="2" width="2.5" height="4.5" fill="#b9bec7"/><path d="M8 11 H16 L15 17 H9Z" fill="#5a606b"/></svg><svg class="a" style="left:816px;top:410px" width="24" height="24" viewBox="0 0 24 24"><rect x="4" y="4.5" width="16.5" height="16.5" rx="2" fill="#b9bec7"/><rect x="10.5" y="2.5" width="3.5" height="3" fill="#b9bec7"/><path d="M12.2 9.5 L17 17.5 H7.5Z" fill="#282d39"/><path d="M12.2 12 L14.5 16 H10Z" fill="#b9bec7"/></svg><svg class="a" style="left:816px;top:464px" width="24" height="24" viewBox="0 0 24 24"><rect x="4" y="7.5" width="3.2" height="12.5" rx="1.6" fill="#b9bec7"/><rect x="10.6" y="7.5" width="3.2" height="12.5" rx="1.6" fill="#b9bec7"/><rect x="17.2" y="7.5" width="3.2" height="12.5" rx="1.6" fill="#b9bec7"/></svg><svg class="a" style="left:816px;top:517px" width="24" height="24" viewBox="0 0 24 24"><rect x="8.2" y="3" width="7.5" height="9.5" rx="3.7" fill="#b9bec7"/><path d="M3 21 Q3 14.5 9 14.5 H15 Q21 14.5 21 21Z" fill="#b9bec7"/></svg><svg class="a" style="left:816px;top:573.5px" width="24" height="24" viewBox="0 0 24 24"><path d="M10.3 1.8h3.4l.5 2.7 1.9.8 2.2-1.6 2.4 2.4-1.6 2.2.8 1.9 2.7.5v3.4l-2.7.5-.8 1.9 1.6 2.2-2.4 2.4-2.2-1.6-1.9.8-.5 2.7h-3.4l-.5-2.7-1.9-.8-2.2 1.6-2.4-2.4 1.6-2.2-.8-1.9-2.7-.5v-3.4l2.7-.5.8-1.9-1.6-2.2 2.4-2.4 2.2 1.6 1.9-.8z" fill="#b9bec7"/><circle cx="12" cy="12" r="3.3" fill="#282d39"/></svg><svg class="a" style="left:816px;top:626.5px" width="24" height="24" viewBox="0 0 24 24"><circle cx="12" cy="12" r="9.8" fill="#b9bec7"/><circle cx="12" cy="8.5" r="2.3" fill="#282d39"/><path d="M10.5 11 H13.5 L12.5 14 L13.3 15 L12 18.5 L11.2 15 L10.4 14Z" fill="#282d39"/></svg>
<div class="t" style="left:1032.5px;top:123.0px;font-size:35.69px;letter-spacing:-0.63px;font-weight:normal;color:#1b222c;-webkit-text-stroke:1.00px #1b222c;">Dashboard</div>
<div class="w" style="left:1022px;top:184px;width:312px;height:100px;border-radius:6px"></div>
<div class="w" style="left:1351px;top:184px;width:162px;height:100px;border-radius:6px"></div>
<div class="t" style="left:1046.5px;top:202.4px;font-size:33.33px;letter-spacing:-0.49px;font-weight:bold;color:#1a212b;">56</div>
<div class="t" style="left:1045.4px;top:246.8px;font-size:17.49px;letter-spacing:-0.13px;font-weight:normal;color:#3d4654;">Revenue</div>
<div class="t" style="left:1192.6px;top:202.6px;font-size:33.12px;letter-spacing:-0.39px;font-weight:bold;color:#1a212b;">$12,500</div>
<div class="t" style="left:1192.6px;top:246.5px;font-size:17.84px;letter-spacing:0.08px;font-weight:normal;color:#3d4654;">Client</div>
<div class="t" style="left:1372.9px;top:203.1px;font-size:32.96px;letter-spacing:-0.76px;font-weight:bold;color:#1a212b;">4.8</div>
<svg class="a" style="left:1422px;top:207px" width="27" height="25" viewBox="0 0 27 25"><line x1="4.5" y1="20.5" x2="19" y2="7" stroke="#2f8641" stroke-width="3.4"/><polygon points="9.5,3 23.5,3 23.5,17" fill="#2f8641"/></svg>
<div class="t" style="left:1372.2px;top:247.6px;font-size:16.86px;letter-spacing:-0.30px;font-weight:normal;color:#1f2833;">Client Satisfaction</div>
<div class="w" style="left:1022px;top:304px;width:491px;height:245px;border-radius:6px"></div>
<div class="t" style="left:1045.8px;top:327.2px;font-size:25.12px;letter-spacing:-0.35px;font-weight:normal;color:#151c26;-webkit-text-stroke:0.65px #151c26;">Project Overview</div>
<svg class="a" style="left:1022px;top:304px" width="491" height="245" viewBox="0 0 491 245"><defs><linearGradient id="cg" x1="0" y1="0" x2="0" y2="1"><stop offset="0" stop-color="#d3e3fb"/><stop offset="0.55" stop-color="#e3edfc"/><stop offset="1" stop-color="#ffffff"/></linearGradient></defs><line x1="10" y1="74.5" x2="474" y2="74.5" stroke="#ececec" stroke-width="1"/><line x1="18" y1="111.5" x2="460" y2="111.5" stroke="#ececec" stroke-width="1"/><path d="M24.2,181.5 C27.6,172.2 31.1,163.6 34.5,160.0 C38.3,156.0 42.2,153.9 46.0,152.0 C50.0,150.0 54.0,149.5 58.0,147.5 C68.7,142.3 79.3,120.5 90.0,120.5 C106.3,120.5 122.7,155.5 139.0,155.5 C151.3,155.5 163.7,136.0 176.0,136.0 C181.3,136.0 186.7,137.5 192.0,137.5 C206.8,137.5 221.7,106.5 236.5,106.5 C250.3,106.5 264.2,127.5 278.0,127.5 C298.0,127.5 318.0,89.2 338.0,89.2 C353.3,89.2 368.7,107.5 384.0,107.5 C391.0,107.5 398.0,104.2 405.0,101.5 C416.7,96.9 428.3,81.7 440.0,77.0 C446.7,74.3 453.3,72.0 460.0,71.0 L460.4,186 L24.2,186 Z" fill="url(#cg)"/><line x1="10" y1="149.5" x2="460" y2="149.5" stroke="#e6e9ee" stroke-width="1"/><line x1="18" y1="186" x2="460" y2="186" stroke="#efefef" stroke-width="1"/><path d="M24.2,181.5 C27.6,172.2 31.1,163.6 34.5,160.0 C38.3,156.0 42.2,153.9 46.0,152.0 C50.0,150.0 54.0,149.5 58.0,147.5 C68.7,142.3 79.3,120.5 90.0,120.5 C106.3,120.5 122.7,155.5 139.0,155.5 C151.3,155.5 163.7,136.0 176.0,136.0 C181.3,136.0 186.7,137.5 192.0,137.5 C206.8,137.5 221.7,106.5 236.5,106.5 C250.3,106.5 264.2,127.5 278.0,127.5 C298.0,127.5 318.0,89.2 338.0,89.2 C353.3,89.2 368.7,107.5 384.0,107.5 C391.0,107.5 398.0,104.2 405.0,101.5 C416.7,96.9 428.3,81.7 440.0,77.0 C446.7,74.3 453.3,72.0 460.0,71.0" fill="none" stroke="#fff" stroke-width="7" stroke-linecap="round"/><path d="M24.2,181.5 C27.6,172.2 31.1,163.6 34.5,160.0 C38.3,156.0 42.2,153.9 46.0,152.0 C50.0,150.0 54.0,149.5 58.0,147.5 C68.7,142.3 79.3,120.5 90.0,120.5 C106.3,120.5 122.7,155.5 139.0,155.5 C151.3,155.5 163.7,136.0 176.0,136.0 C181.3,136.0 186.7,137.5 192.0,137.5 C206.8,137.5 221.7,106.5 236.5,106.5 C250.3,106.5 264.2,127.5 278.0,127.5 C298.0,127.5 318.0,89.2 338.0,89.2 C353.3,89.2 368.7,107.5 384.0,107.5 C391.0,107.5 398.0,104.2 405.0,101.5 C416.7,96.9 428.3,81.7 440.0,77.0 C446.7,74.3 453.3,72.0 460.0,71.0" fill="none" stroke="#3986f2" stroke-width="4.2" stroke-linecap="round"/></svg>
<div class="t" style="left:1046.7px;top:509.5px;font-size:16.21px;letter-spacing:-0.40px;font-weight:normal;color:#28313b;">Jan</div>
<div class="t" style="left:1098.6px;top:509.8px;font-size:15.82px;letter-spacing:-0.65px;font-weight:normal;color:#28313b;">Mar</div>
<div class="t" style="left:1150.4px;top:509.4px;font-size:16.27px;letter-spacing:-0.35px;font-weight:normal;color:#28313b;">Apr</div>
<div class="t" style="left:1200.2px;top:509.6px;font-size:16.08px;letter-spacing:-0.55px;font-weight:normal;color:#28313b;">May</div>
<div class="t" style="left:1255.0px;top:509.6px;font-size:16.10px;letter-spacing:-0.46px;font-weight:normal;color:#28313b;">Jun</div>
<div class="t" style="left:1312.7px;top:509.4px;font-size:16.30px;letter-spacing:-0.28px;font-weight:normal;color:#28313b;">Jul</div>
<div class="t" style="left:1362.8px;top:509.6px;font-size:16.12px;letter-spacing:-0.50px;font-weight:normal;color:#28313b;">Aug</div>
<div class="t" style="left:1418.2px;top:510.1px;font-size:15.48px;letter-spacing:-0.88px;font-weight:normal;color:#28313b;">Sen</div>
<div class="t" style="left:1471.0px;top:509.4px;font-size:16.25px;letter-spacing:-0.38px;font-weight:normal;color:#28313b;">Jun</div>
<div class="w" style="left:1022px;top:567px;width:491px;height:265px;border-radius:6px"></div>
<div class="t" style="left:1045.5px;top:588.1px;font-size:24.74px;letter-spacing:0.12px;font-weight:normal;color:#151c26;-webkit-text-stroke:0.65px #151c26;">AI Agent Configuration</div>
<svg class="a" style="left:1043.5px;top:642.0px" width="38" height="24" viewBox="0 0 38 24"><rect x="0.5" y="0" width="37" height="24" rx="12" fill="#2f7df6"/><circle cx="26" cy="12" r="8.6" fill="#fff"/></svg>
<div class="t" style="left:1094.0px;top:643.6px;font-size:20.55px;letter-spacing:-0.40px;font-weight:normal;color:#161d27;">Generate Reports</div>
<svg class="a" style="left:1043.5px;top:690.3px" width="38" height="24" viewBox="0 0 38 24"><rect x="0.5" y="0" width="37" height="24" rx="12" fill="#2f7df6"/><circle cx="26" cy="12" r="8.6" fill="#fff"/></svg>
<div class="t" style="left:1094.0px;top:691.9px;font-size:20.87px;letter-spacing:-0.36px;font-weight:normal;color:#161d27;">Analyze Client Feedback</div>
<svg class="a" style="left:1043.5px;top:738.2px" width="38" height="24" viewBox="0 0 38 24"><rect x="0.5" y="0" width="37" height="24" rx="12" fill="#2f7df6"/><circle cx="26" cy="12" r="8.6" fill="#fff"/></svg>
<div class="t" style="left:1094.6px;top:740.4px;font-size:20.78px;letter-spacing:-0.34px;font-weight:normal;color:#161d27;">Automate Invoices</div>
<svg class="a" style="left:1043.5px;top:786.6px" width="38" height="24" viewBox="0 0 38 24"><rect x="0.5" y="0" width="37" height="24" rx="12" fill="#cfcfcf"/><circle cx="12" cy="12" r="9" fill="#fff"/></svg>
<div class="t" style="left:1094.6px;top:787.9px;font-size:21.19px;letter-spacing:-0.43px;font-weight:normal;color:#161d27;">Optimize Scheduling</div>
<div class="w" style="left:1022px;top:850px;width:491px;height:200px;border-radius:6px"></div>
<div class="t" style="left:1046.3px;top:872.7px;font-size:23.14px;letter-spacing:0.48px;font-weight:normal;color:#151c26;-webkit-text-stroke:0.65px #151c26;">Recent Reports</div>
<div class="a" style="left:1046px;top:927.3px;width:6px;height:6px;border-radius:50%;background:#66696e"></div>
<div class="t" style="left:1067.5px;top:919.0px;font-size:20.91px;letter-spacing:-0.28px;font-weight:normal;color:#161d27;">Monthly Revenue Analysis</div>
<div class="a" style="left:1046px;top:969.7px;width:6px;height:6px;border-radius:50%;background:#66696e"></div>
<div class="t" style="left:1067.5px;top:962.8px;font-size:20.32px;letter-spacing:0.02px;font-weight:normal;color:#161d27;">Cilent Feedback Summary</div>
<div class="a" style="left:1046px;top:1013.2px;width:6px;height:6px;border-radius:50%;background:#66696e"></div>
<div class="t" style="left:1067.5px;top:1006.5px;font-size:20.91px;letter-spacing:-0.26px;font-weight:normal;color:#161d27;">Project Timeline Review</div>
</body></html>
